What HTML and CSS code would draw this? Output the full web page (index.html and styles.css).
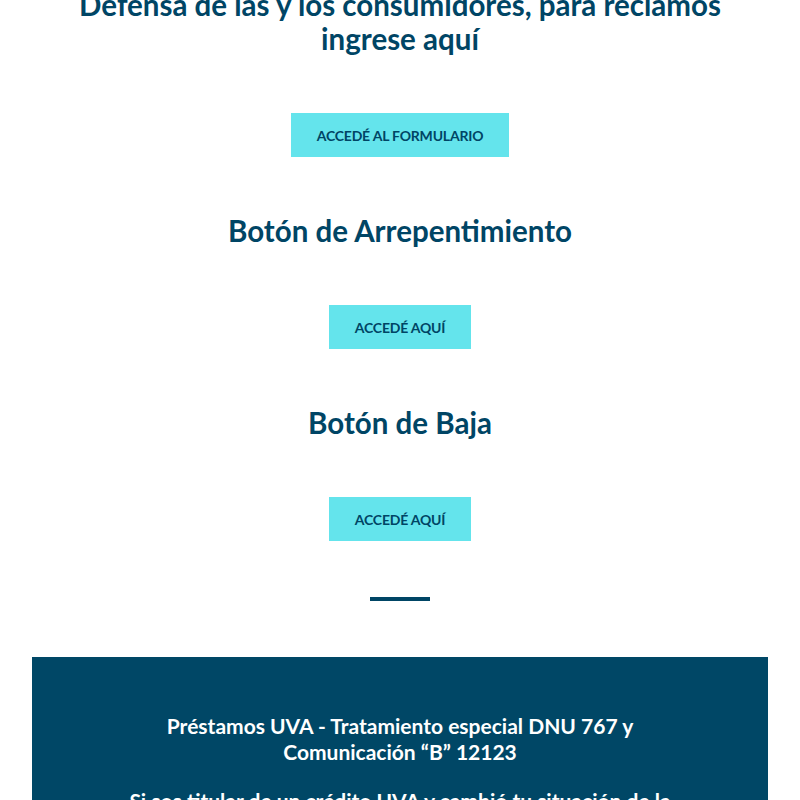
FILE: index.html
```html
<!DOCTYPE html>
<html lang="es">
<head>
<meta charset="utf-8">
<title>Defensa del consumidor</title>
<link rel="stylesheet" href="styles.css">
</head>
<body>
<main class="page">
  <section class="actions">
    <h2 class="heading heading-first">Defensa de las y los consumidores, para reclamos ingrese aquí</h2>
    <a class="btn" href="#">Accedé al formulario</a>
    <h2 class="heading">Botón de Arrepentimiento</h2>
    <a class="btn" href="#">Accedé aquí</a>
    <h2 class="heading">Botón de Baja</h2>
    <a class="btn" href="#">Accedé aquí</a>
    <hr class="divider">
  </section>
  <section class="uva">
    <h3 class="uva-title">Préstamos UVA - Tratamiento especial DNU 767 y Comunicación “B” 12123</h3>
    <p class="uva-text">Si sos titular de un crédito UVA y cambió tu situación de la cuota del préstamo, podés solicitar el tratamiento especial.</p>
  </section>
</main>
</body>
</html>
```

FILE: styles.css
```css
* { box-sizing: border-box; }
html, body { margin: 0; padding: 0; background: #fff; }
body {
  font-family: "Lato", "Open Sans", sans-serif;
  color: #004565;
  overflow: hidden;
}
.page {
  padding: 0 32px;
}
.actions {
  display: flex;
  flex-direction: column;
  align-items: center;
  gap: 57px;
}
.heading {
  margin: 0;
  font-size: 29.5px;
  line-height: 34px;
  font-weight: 700;
  text-align: center;
  color: #004565;
  max-width: 680px;
}
.heading-first {
  margin-top: -12px;
}
.btn {
  display: inline-flex;
  align-items: center;
  justify-content: center;
  height: 44px;
  padding: 0 26px;
  background: #64e4ec;
  color: #004565;
  font-size: 14px;
  font-weight: 700;
  letter-spacing: -0.2px;
  text-transform: uppercase;
  text-decoration: none;
}
.divider {
  width: 60px;
  height: 4px;
  margin: -1px 0 0;
  border: 0;
  background: #004565;
}
.uva {
  margin-top: 56px;
  background: #004766;
  padding: 56px 88px 40px;
  text-align: center;
  color: #fff;
}
.uva-title {
  margin: 0 auto;
  max-width: 500px;
  font-size: 21px;
  line-height: 26px;
  font-weight: 700;
}
.uva-text {
  margin: 23px 0 0;
  font-size: 21px;
  line-height: 26px;
  font-weight: 700;
}
```
